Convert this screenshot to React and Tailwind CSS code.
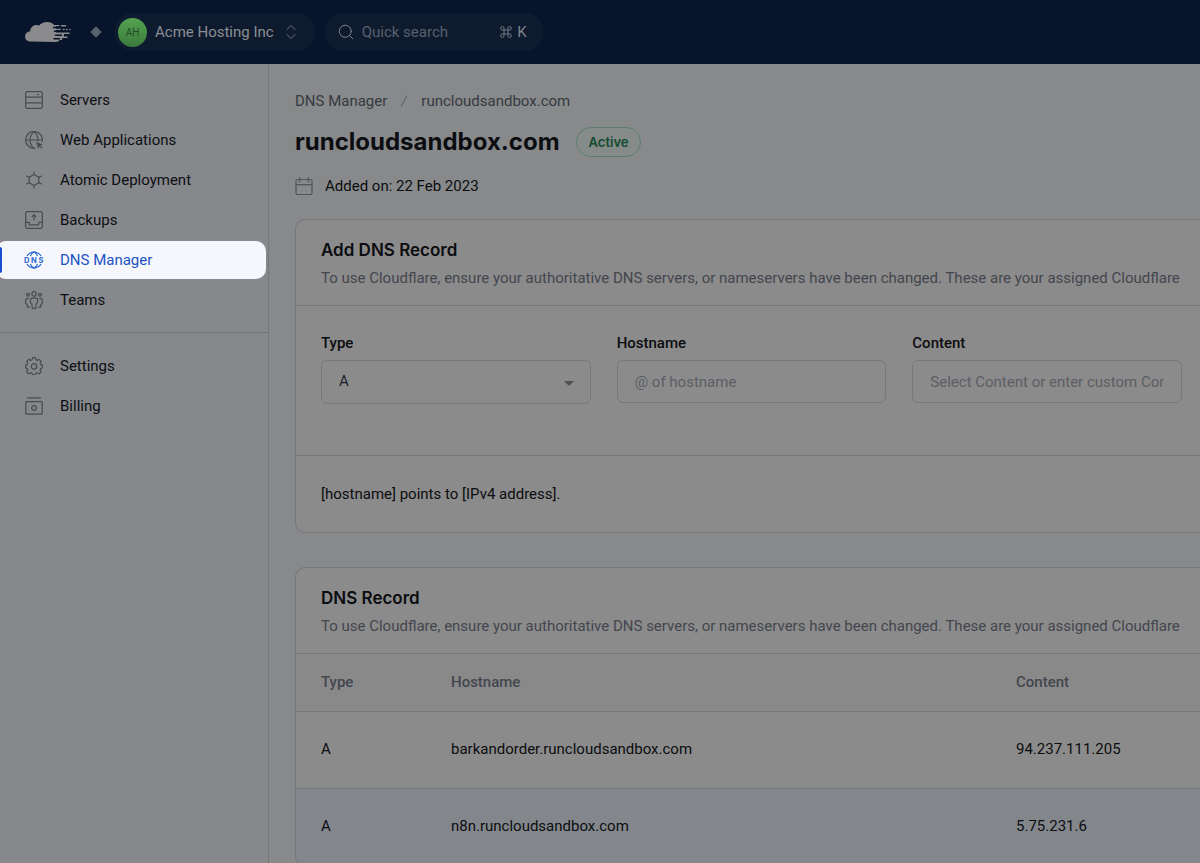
import { Search } from "lucide-react";
import clsx from "clsx";

function Icon({ children, className }) {
  return (
    <svg
      viewBox="0 0 18 18"
      fill="none"
      stroke="currentColor"
      strokeWidth="1.2"
      strokeLinecap="round"
      strokeLinejoin="round"
      aria-hidden="true"
      className={clsx("size-[18px] shrink-0", className)}
    >
      {children}
    </svg>
  );
}

const icons = {
  servers: (
    <Icon>
      <rect x="0.7" y="0.7" width="16.6" height="16.6" rx="1.4" />
      <path d="M0.7 6.2h16.6M0.7 11.8h16.6M12.3 3.5h1.6" />
    </Icon>
  ),
  web: (
    <Icon>
      <path d="M10 17.2a8.4 8.4 0 1 1 7.3-6.9" />
      <path d="M9 0.6C6.4 2.7 5 5.6 5 9s1.4 6.3 4 8.4M9 0.6c2.6 2.1 4 5 4 8.4v1M0.7 9h16.6" />
      <path d="M11.8 11.6l5.4 1.9-2.2 1 2.4 2.5-0.5 0.4-2.4-2.3-1 2z" fill="currentColor" strokeWidth="0.6" />
    </Icon>
  ),
  atomic: (
    <Icon>
      <path d="M9 3.4l4.8 2.8v5.6L9 14.6l-4.8-2.8V6.2z" />
      <path d="M9 3.4V1M9 14.6V17M13.8 6.2l2.6-1.2M13.8 11.8l2.6 1.2M4.2 6.2L1.6 5M4.2 11.8L1.6 13" />
    </Icon>
  ),
  backups: (
    <Icon>
      <rect x="0.7" y="0.7" width="16.6" height="16.6" rx="1.4" />
      <path d="M0.7 11.3h3.6v2.5h9.4v-2.5h3.6M9 8.8V3.7M7 5.6l2-2 2 2" />
    </Icon>
  ),
  dns: (
    <Icon className="overflow-visible">
      <path d="M2.2 4.6a8.3 8.3 0 0 1 13.6 0M2.2 13.4a8.3 8.3 0 0 0 13.6 0" />
      <path d="M5.7 4.6C6.4 3 7.5 1.6 9 0.8c1.5 0.8 2.6 2.2 3.3 3.8M5.7 13.4c0.7 1.6 1.8 3 3.3 3.8 1.5-0.8 2.6-2.2 3.3-3.8" />
      <text y="11.7" fill="currentColor" stroke="none" fontSize="7.5" fontWeight="700" fontFamily="Inter, sans-serif">
        <tspan x="-0.9">D</tspan>
        <tspan x="6.1">N</tspan>
        <tspan x="13.6">S</tspan>
      </text>
    </Icon>
  ),
  teams: (
    <Icon>
      <circle cx="9" cy="2.9" r="2.2" />
      <circle cx="3" cy="3.7" r="1.4" />
      <circle cx="15" cy="3.7" r="1.4" />
      <path d="M6.6 7.2h4.8a1.2 1.2 0 0 1 1.2 1.2v3.2l-1.4 1.2-0.4 4.5H7.2l-0.4-4.5-1.4-1.2V8.4a1.2 1.2 0 0 1 1.2-1.2z" />
      <path d="M3.2 7.3H2.3L0.7 8.8v3.6l1.4 1 0.3 2.8h2M14.8 7.3h0.9l1.6 1.5v3.6l-1.4 1-0.3 2.8h-2" />
    </Icon>
  ),
  settings: (
    <Icon>
      <path d="M7.5 0.7h3l0.5 2.1 1.3 0.6 2-1.1 2 2-1.1 1.9 0.6 1.4 1.6 0.5v2.9l-1.7 0.5-0.6 1.4 1.1 1.9-2 2-1.9-1.1-1.4 0.6-0.5 1.5h-2.9l-0.5-1.5-1.4-0.6-1.9 1.1-2-2 1.1-1.9-0.6-1.4-1.600-0.5V8.100l1.600-0.500 0.600-1.400-1.100-1.900 2-2 2 1.100L7 2.800z" />
      <circle cx="9" cy="9.4" r="2.7" />
    </Icon>
  ),
  billing: (
    <Icon>
      <path d="M2.5 0.8h13" />
      <rect x="0.8" y="4.6" width="16.4" height="12.6" rx="0.7" />
      <circle cx="9" cy="10.9" r="2.3" />
    </Icon>
  ),
};

const mainLinks = [
  { label: "Servers", icon: "servers" },
  { label: "Web Applications", icon: "web" },
  { label: "Atomic Deployment", icon: "atomic" },
  { label: "Backups", icon: "backups" },
  { label: "DNS Manager", icon: "dns", active: true },
  { label: "Teams", icon: "teams" },
];

const accountLinks = [
  { label: "Settings", icon: "settings" },
  { label: "Billing", icon: "billing" },
];

const records = [
  { type: "A", hostname: "barkandorder.runcloudsandbox.com", content: "94.237.111.205" },
  { type: "A", hostname: "n8n.runcloudsandbox.com", content: "5.75.231.6" },
];

const description =
  "To use Cloudflare, ensure your authoritative DNS servers, or nameservers have been changed. These are your assigned Cloudflare";

function Logo() {
  return (
    <svg viewBox="0 0 46 20" className="h-5 w-[46px]" aria-label="RunCloud" role="img">
      <path
        d="M5.5 19.6A5.3 5.3 0 0 1 0 14.4a5.4 5.4 0 0 1 5.2-5.2C5.4 5.5 8.2 3 11.4 3c1 0 1.9 0.2 2.7 0.6C15.8 1.2 18.8 0 22 0c3.1 0 5.6 1 7.2 3h5.3v1.3h-3.6v2.5h5v1.3h-5v2.5h13.6v1.5H39v2.3h3.5v1.5H37.2v2.1h-2.4c-0.9 1.2-2.3 1.9-4.2 1.9z"
        fill="#8b8b8d"
      />
      <path d="M28.5 5.5h6M29.5 9.3h8M30.5 13.2h6M29 16.8h5.5" stroke="#07142b" strokeWidth="1.5" strokeLinecap="round" />
      <path d="M36.5 3.7h4M38.5 7.5h0.5M41.5 7.5h0.5M44.8 7.5h0.2" stroke="#8b8b8d" strokeWidth="1.5" strokeLinecap="round" />
    </svg>
  );
}

function Header() {
  return (
    <header className="flex h-16 shrink-0 items-center bg-[#07142b] pl-[25px]">
      <a href="#home">
        <Logo />
      </a>
      <svg viewBox="0 0 12 12" className="ml-[19px] size-3" aria-hidden="true">
        <path d="M6 0.3L11.7 6 6 11.7 0.3 6z" fill="#59626e" />
      </svg>
      <button
        type="button"
        className="ml-3 flex h-[38px] items-center rounded-full bg-[#0e1b2e] pr-[18px] pl-1 text-[#8b8f95]"
      >
        <span className="flex size-[29px] items-center justify-center rounded-full bg-linear-to-b from-[#54a350] to-[#3c7b3d] text-[10px] text-[#1f4a29]">
          AH
        </span>
        <span className="ml-2">Acme Hosting Inc</span>
        <svg
          viewBox="0 0 10 16"
          fill="none"
          stroke="#6a727d"
          strokeLinecap="round"
          strokeLinejoin="round"
          className="mr-px ml-3 h-4 w-[10px]"
          aria-hidden="true"
        >
          <path d="M1 5.5l4-4 4 4M1 10.5l4 4 4-4" />
        </svg>
      </button>
      <button
        type="button"
        className="ml-[9px] flex h-[38px] w-[220px] items-center rounded-full bg-[#0e1b2e] px-[13px] text-[#59616c]"
      >
        <Search className="size-[18px] text-[#7d838b]" strokeWidth={1.3} />
        <span className="ml-[7px]">Quick search</span>
        <span className="mr-1 ml-auto flex items-center gap-[5px] text-[#7d838b]">
          <svg viewBox="0 0 12 12" fill="none" stroke="currentColor" className="size-3" aria-hidden="true">
            <path
              d="M4 4h4v4H4zM4 4H2.3A1.7 1.7 0 1 1 4 2.3zM8 4V2.3A1.7 1.7 0 1 1 9.7 4zM8 8h1.7A1.7 1.7 0 1 1 8 9.7zM4 8v1.7A1.7 1.7 0 1 1 2.3 8z"
              strokeWidth="0.9"
            />
          </svg>
          K
        </span>
      </button>
    </header>
  );
}

function NavItem({ label, icon, active }) {
  return (
    <li>
      <a
        href={`#${icon}`}
        aria-current={active ? "page" : undefined}
        className={clsx(
          "relative -ml-1 mr-[2px] flex h-[38px] items-center gap-[17px] rounded-[10px] pl-[29px]",
          active ? "bg-[#f6f7fc] text-[#1c54c4]" : "text-[#0c0f14]"
        )}
      >
        {active && <span className="absolute left-1 h-[26px] w-[2px] rounded-r-sm bg-[#1a50d0]" />}
        <span className={active ? "text-[#2c68d0]" : "text-[#484b51]"}>{icons[icon]}</span>
        {label}
      </a>
    </li>
  );
}

function Sidebar() {
  return (
    <nav className="w-[269px] shrink-0 border-r border-[#75777b] bg-[#87888b] pt-[17px]">
      <ul className="space-y-[2px]">
        {mainLinks.map((link) => (
          <NavItem key={link.icon} {...link} />
        ))}
      </ul>
      <hr className="mt-[13px] mb-[14px] border-[#727478]" />
      <ul className="space-y-[2px]">
        {accountLinks.map((link) => (
          <NavItem key={link.icon} {...link} />
        ))}
      </ul>
    </nav>
  );
}

function Card({ title, children }) {
  return (
    <section className="overflow-hidden rounded-l-[10px] border-y border-l border-[#76787c] bg-[#8b8b8b]">
      <div className="border-b border-[#76787c] pt-[18px] pb-[15px] pl-[25px]">
        <h2 className="font-['Inter',sans-serif] text-[17px] leading-6 font-semibold text-[#0c0d10]">{title}</h2>
        <p className="mt-1 leading-6 whitespace-nowrap text-[#43464e]">{description}</p>
      </div>
      {children}
    </section>
  );
}

const fieldClass =
  "block w-full rounded-md border border-[#76787c] bg-transparent px-[17px] outline-none placeholder:text-[#5b5e65]";

function DnsForm() {
  return (
    <form>
      <div className="grid grid-cols-3 gap-x-[26px] pt-[25px] pr-[18px] pb-[51px] pl-[25px]">
        <div>
          <label htmlFor="type" className="mb-[5px] block leading-6 font-medium">
            Type
          </label>
          <div className="relative">
            <select id="type" className={clsx(fieldClass, "h-11 appearance-none pb-[2px] text-[#1b222c]")}>
              <option>A</option>
            </select>
            <svg viewBox="0 0 10 5" className="pointer-events-none absolute top-[21px] right-[17px] h-[5px] w-[10px]" aria-hidden="true">
              <path d="M0 0h10L5 5z" fill="#4e5156" />
            </svg>
          </div>
        </div>
        <div>
          <label htmlFor="hostname" className="mb-[5px] block leading-6 font-medium">
            Hostname
          </label>
          <input id="hostname" placeholder="@ of hostname" className={clsx(fieldClass, "h-[43px]")} />
        </div>
        <div>
          <label htmlFor="content" className="mb-[5px] block leading-6 font-medium">
            Content
          </label>
          <input id="content" placeholder="Select Content or enter custom Content" className={clsx(fieldClass, "h-[43px]")} />
        </div>
      </div>
      <p className="border-t border-[#76787c] py-[26px] pl-[25px] leading-6">[hostname] points to [IPv4 address].</p>
    </form>
  );
}

function RecordTable() {
  return (
    <table className="w-full table-fixed text-left">
      <thead>
        <tr className="h-[57px] border-b border-[#76787c] bg-[#898989] text-[#43464e]">
          <th className="w-[155px] pl-[25px] font-medium">Type</th>
          <th className="w-5/8 font-medium">Hostname</th>
          <th className="font-medium">Content</th>
        </tr>
      </thead>
      <tbody>
        {records.map((record) => (
          <tr key={record.hostname} className="h-[77px] border-b border-[#76787c] even:bg-[#83878c]">
            <td className="pl-[25px]">{record.type}</td>
            <td>{record.hostname}</td>
            <td>{record.content}</td>
          </tr>
        ))}
      </tbody>
    </table>
  );
}

export default function App() {
  return (
    <div className="flex h-screen flex-col overflow-hidden bg-[#87898b] font-['Roboto',sans-serif] text-[15px] text-[#0c0d10]">
      <Header />
      <div className="flex min-h-0 flex-1">
        <Sidebar />
        <main className="min-w-0 flex-1 overflow-hidden pt-[25px] pl-[26px]">
          <div className="flex items-center leading-6 text-[#363a42]">
            <a href="#dns">DNS Manager</a>
            <svg viewBox="0 0 8 12" className="mx-[13px] h-3 w-2" aria-hidden="true">
              <path d="M1 11.5L7 0.5" stroke="#5c5f65" />
            </svg>
            <a href="#domain">runcloudsandbox.com</a>
          </div>
          <div className="mt-[13px] flex items-center">
            <h1 className="font-['Inter',sans-serif] text-2xl leading-8 font-bold">runcloudsandbox.com</h1>
            <span className="ml-4 rounded-full border border-[#5a7f70] bg-[#848b88] px-3 py-1 font-['Inter',sans-serif] text-[13px] leading-5 font-semibold text-[#13492f]">
              Active
            </span>
          </div>
          <div className="mt-4 flex items-center gap-3 leading-6">
            <Icon className="text-[#515459]">
              <rect x="1" y="2.5" width="16" height="15" rx="1.5" />
              <path d="M1 7.7h16M4.7 0.6v4M13.3 0.6v4" />
            </Icon>
            Added on: 22 Feb 2023
          </div>
          <div className="mt-[21px] space-y-[34px]">
            <Card title="Add DNS Record">
              <DnsForm />
            </Card>
            <Card title="DNS Record">
              <RecordTable />
            </Card>
          </div>
        </main>
      </div>
    </div>
  );
}
